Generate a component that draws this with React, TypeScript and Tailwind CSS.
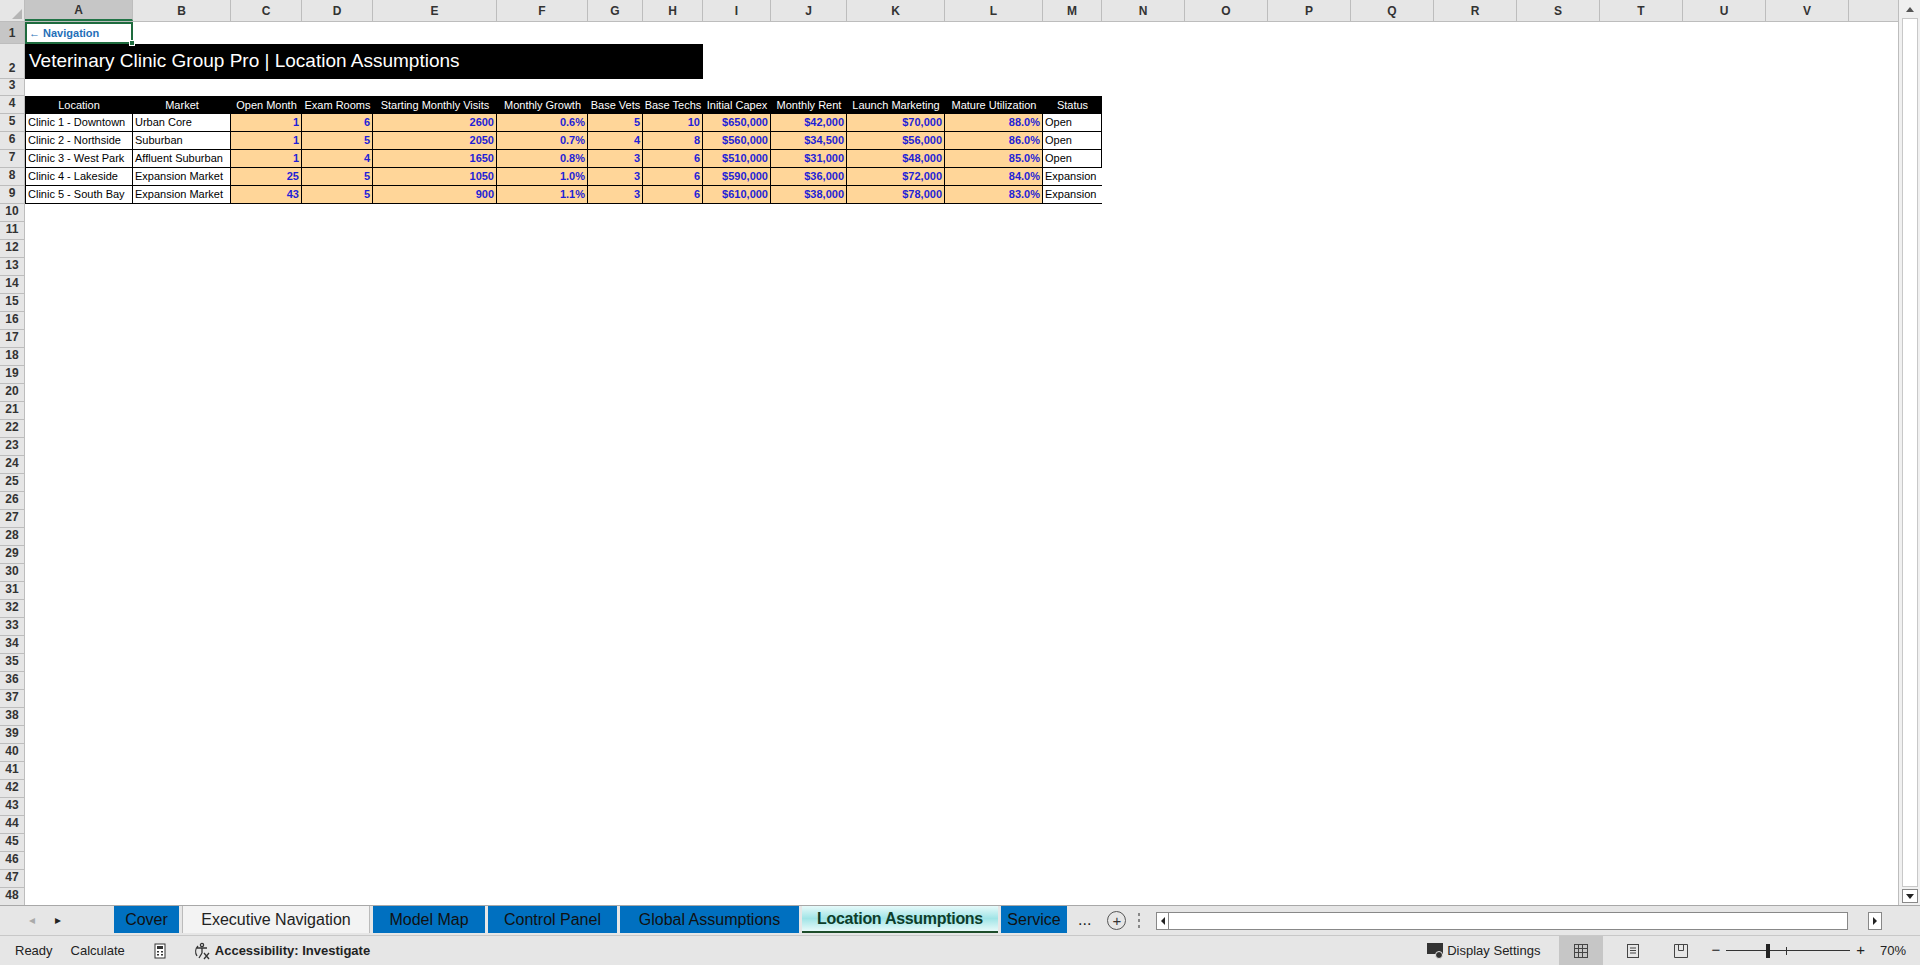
import React from "react";

const cols = [
  { l: "A", w: 108 }, { l: "B", w: 98 }, { l: "C", w: 71 }, { l: "D", w: 71 },
  { l: "E", w: 124 }, { l: "F", w: 91 }, { l: "G", w: 55 }, { l: "H", w: 60 },
  { l: "I", w: 68 }, { l: "J", w: 76 }, { l: "K", w: 98 }, { l: "L", w: 98 },
  { l: "M", w: 59 }, { l: "N", w: 83 }, { l: "O", w: 83 }, { l: "P", w: 83 },
  { l: "Q", w: 83 }, { l: "R", w: 83 }, { l: "S", w: 83 }, { l: "T", w: 83 },
  { l: "U", w: 83 }, { l: "V", w: 83 },
];

const headers = [
  "Location", "Market", "Open Month", "Exam Rooms", "Starting Monthly Visits", "Monthly Growth",
  "Base Vets", "Base Techs", "Initial Capex", "Monthly Rent", "Launch Marketing", "Mature Utilization", "Status",
];

const data = [
  ["Clinic 1 - Downtown", "Urban Core", "1", "6", "2600", "0.6%", "5", "10", "$650,000", "$42,000", "$70,000", "88.0%", "Open"],
  ["Clinic 2 - Northside", "Suburban", "1", "5", "2050", "0.7%", "4", "8", "$560,000", "$34,500", "$56,000", "86.0%", "Open"],
  ["Clinic 3 - West Park", "Affluent Suburban", "1", "4", "1650", "0.8%", "3", "6", "$510,000", "$31,000", "$48,000", "85.0%", "Open"],
  ["Clinic 4 - Lakeside", "Expansion Market", "25", "5", "1050", "1.0%", "3", "6", "$590,000", "$36,000", "$72,000", "84.0%", "Expansion"],
  ["Clinic 5 - South Bay", "Expansion Market", "43", "5", "900", "1.1%", "3", "6", "$610,000", "$38,000", "$78,000", "83.0%", "Expansion"],
];

const tabs = [
  { n: "Cover", w: 65, k: "blue" },
  { n: "Executive Navigation", w: 188, k: "plain" },
  { n: "Model Map", w: 112, k: "blue" },
  { n: "Control Panel", w: 129, k: "blue" },
  { n: "Global Assumptions", w: 179, k: "blue" },
  { n: "Location Assumptions", w: 196, k: "active" },
  { n: "Service", w: 66, k: "blue" },
];

const RowHead = ({ n, h, sel }: { n: number; h: number; sel?: boolean }) => (
  <div
    className={`w-[25px] shrink-0 flex items-end justify-center pb-[1px] border-r border-b border-[#bdbdbd] text-[12px] font-bold text-[#333] ${sel ? "bg-[#c6c6c6]" : "bg-[#e6e6e6]"}`}
    style={{ height: h }}
  >
    {n}
  </div>
);

export default function App() {
  const sum = (a: number, b: number) => cols.slice(a, b).reduce((s, c) => s + c.w, 0);
  const empties = Array.from({ length: 39 }, (_, i) => i + 10);

  return (
    <div className="w-[1920px] h-[965px] bg-white overflow-hidden flex flex-col" style={{ fontFamily: "'Liberation Sans', Arial, sans-serif" }}>
      <div className="flex h-[905px]">
        <div className="flex-1 overflow-hidden flex flex-col">
          {/* column headers */}
          <div className="flex h-[22px] shrink-0 bg-[#e6e6e6] border-b border-[#bdbdbd]">
            <div className="w-[25px] shrink-0 border-r border-[#bdbdbd] relative">
              <div className="absolute right-[2px] bottom-[2px] w-0 h-0 border-l-[10px] border-l-transparent border-b-[10px] border-b-[#b5b5b5]" />
            </div>
            {cols.map((c, i) => (
              <div
                key={c.l}
                className={`shrink-0 flex items-center justify-center text-[12px] font-bold text-[#333] border-r border-[#bdbdbd] ${i === 0 ? "bg-[#c6c6c6] border-b-2 border-b-[#217346]" : ""}`}
                style={{ width: c.w }}
              >
                {c.l}
              </div>
            ))}
            <div className="flex-1" />
          </div>

          {/* row 1 */}
          <div className="flex h-[22px] shrink-0">
            <RowHead n={1} h={22} sel />
            <div className="w-[108px] shrink-0 border-2 border-[#1e6b3e] flex items-end pl-[2px] pb-[1px] text-[11px] font-bold text-[#1f6fb8] relative">
              ← Navigation
              <div className="absolute -right-[4px] -bottom-[4px] w-[6px] h-[6px] bg-[#1e6b3e] border border-white" />
            </div>
          </div>

          {/* row 2 title */}
          <div className="flex h-[35px] shrink-0">
            <RowHead n={2} h={35} />
            <div className="bg-black text-white text-[19px] flex items-center pl-[4px]" style={{ width: sum(0, 8) }}>
              Veterinary Clinic Group Pro | Location Assumptions
            </div>
          </div>

          {/* row 3 */}
          <div className="flex h-[17px] shrink-0">
            <RowHead n={3} h={17} />
          </div>

          {/* row 4 headers */}
          <div className="flex h-[18px] shrink-0">
            <RowHead n={4} h={18} />
            {headers.map((h, i) => (
              <div
                key={h}
                className="shrink-0 bg-black text-white text-[11px] flex items-center justify-center whitespace-nowrap overflow-hidden"
                style={{ width: cols[i].w }}
              >
                {h}
              </div>
            ))}
          </div>

          {/* rows 5-9 */}
          {data.map((r, ri) => (
            <div key={ri} className="flex h-[18px] shrink-0">
              <RowHead n={ri + 5} h={18} />
              {r.map((v, ci) => {
                const num = ci >= 2 && ci <= 11;
                const boxed = ci < 2 || (ci === 12 && ri < 3);
                return (
                  <div
                    key={ci}
                    className={`shrink-0 h-[18px] flex items-center whitespace-nowrap overflow-hidden text-[11px] border-b border-black ${
                      num
                        ? "bg-[#ffd699] text-[#1f1fd6] font-bold justify-end pr-[2px] border-r"
                        : "bg-white text-black pl-[2px]"
                    } ${boxed ? "border-r" : ""} ${ci === 0 ? "border-l" : ""}`}
                    style={{ width: cols[ci].w }}
                  >
                    {v}
                  </div>
                );
              })}
            </div>
          ))}

          {empties.map((n) => (
            <div key={n} className="flex h-[18px] shrink-0">
              <RowHead n={n} h={18} />
            </div>
          ))}
        </div>

        {/* vertical scrollbar */}
        <div className="w-[22px] shrink-0 bg-[#f0f0f0] border-l border-[#bdbdbd] flex flex-col items-center justify-between py-[2px]">
          <div className="w-[16px] h-[14px] flex items-center justify-center">
            <div className="w-0 h-0 border-l-[4px] border-r-[4px] border-b-[5px] border-l-transparent border-r-transparent border-b-[#555]" />
          </div>
          <div className="flex-1 w-[16px] bg-white border border-[#c8c8c8] my-[2px]" />
          <div className="w-[16px] h-[14px] bg-white border border-[#888] flex items-center justify-center">
            <div className="w-0 h-0 border-l-[4px] border-r-[4px] border-t-[5px] border-l-transparent border-r-transparent border-t-[#222]" />
          </div>
        </div>
      </div>

      {/* tabs bar */}
      <div className="h-[30px] shrink-0 bg-[#e6e6e6] border-t border-[#a8a8a8] flex items-start">
        <div className="w-[114px] flex items-center h-[28px] gap-[20px] pl-[29px] text-[12px]">
          <span className="text-[#aaa]">◂</span>
          <span className="text-[#222]">▸</span>
        </div>
        {tabs.map((t) => (
          <div
            key={t.n}
            className={`shrink-0 h-[27px] mr-[3px] flex items-center justify-center text-[16px] whitespace-nowrap overflow-hidden ${
              t.k === "blue"
                ? "bg-[#0070c0] text-[#111]"
                : t.k === "plain"
                ? "bg-[#f3f3f3] text-[#222] border-x border-[#bbb]"
                : "bg-gradient-to-b from-[#e6fafa] via-[#9fe4e6] to-[#e6fafa] text-[#0d3d2a] font-bold border-b-2 border-[#1e4d2b] tracking-[-0.3px]"
            }`}
            style={{ width: t.w }}
          >
            {t.n}
          </div>
        ))}
        <span className="ml-[8px] h-[28px] flex items-center text-[16px] text-[#222]">...</span>
        <div className="ml-[16px] mt-[5px] w-[19px] h-[19px] rounded-full border border-[#555] flex items-center justify-center text-[15px] leading-none text-[#333]">+</div>
        <div className="ml-[12px] mt-[7px] flex flex-col gap-[3px]">
          <div className="w-[2px] h-[3px] bg-[#888]" />
          <div className="w-[2px] h-[3px] bg-[#888]" />
          <div className="w-[2px] h-[3px] bg-[#888]" />
        </div>
        <div className="ml-[16px] mt-[6px] w-[692px] h-[18px] bg-white border border-[#888] flex">
          <div className="w-[12px] border-r border-[#888] flex items-center justify-center">
            <div className="w-0 h-0 border-t-[4px] border-b-[4px] border-r-[4px] border-t-transparent border-b-transparent border-r-[#222]" />
          </div>
        </div>
        <div className="ml-[20px] mt-[6px] w-[14px] h-[18px] bg-white border border-[#888] flex items-center justify-center">
          <div className="w-0 h-0 border-t-[4px] border-b-[4px] border-l-[4px] border-t-transparent border-b-transparent border-l-[#222]" />
        </div>
      </div>

      {/* status bar */}
      <div className="h-[30px] shrink-0 bg-[#e6e6e6] border-t border-[#c8c8c8] flex items-center text-[13px] text-[#222]">
        <span className="ml-[15px]">Ready</span>
        <span className="ml-[18px]">Calculate</span>
        <svg className="ml-[28px]" width="14" height="16" viewBox="0 0 14 16">
          <rect x="2" y="1" width="10" height="14" fill="#fff" stroke="#333" />
          <rect x="4" y="3" width="6" height="3" fill="#333" />
          <g fill="#333">
            <rect x="4" y="8" width="2" height="1.5" /><rect x="8" y="8" width="2" height="1.5" />
            <rect x="4" y="11" width="2" height="1.5" /><rect x="8" y="11" width="2" height="1.5" />
          </g>
        </svg>
        <svg className="ml-[25px]" width="20" height="18" viewBox="0 0 20 18" fill="none" stroke="#333" strokeWidth="1.3">
          <circle cx="10" cy="3" r="1.6" />
          <path d="M5 6h10M10 6v5M10 11l-3 5M6 4a8 8 0 0 0-1 10" />
          <path d="M12 11l5 6M17 11l-5 6" />
        </svg>
        <span className="ml-[3px] font-bold">Accessibility: Investigate</span>
        <div className="flex-1" />
        <svg width="18" height="18" viewBox="0 0 18 18">
          <rect x="0" y="1" width="16" height="11" fill="#333" />
          <circle cx="12" cy="13" r="3.5" fill="#333" stroke="#e6e6e6" />
        </svg>
        <span className="ml-[2px]">Display Settings</span>
        <div className="ml-[19px] w-[44px] h-[30px] bg-[#c6c6c6] flex items-center justify-center">
          <svg width="16" height="16" viewBox="0 0 16 16" fill="none" stroke="#444">
            <rect x="1.5" y="1.5" width="13" height="13" />
            <path d="M1.5 5.5h13M1.5 9.5h13M5.5 1.5v13M9.5 1.5v13" />
          </svg>
        </div>
        <svg className="ml-[22px]" width="16" height="16" viewBox="0 0 16 16" fill="none" stroke="#444">
          <rect x="2.5" y="1.5" width="11" height="13" />
          <path d="M5 5h6M5 7.5h6M5 10h6" />
        </svg>
        <svg className="ml-[32px]" width="16" height="16" viewBox="0 0 16 16" fill="none" stroke="#444">
          <path d="M1.5 1.5h13v13h-13zM5.5 1.5v6h5v-6" />
        </svg>
        <span className="ml-[22px] text-[15px]">−</span>
        <div className="ml-[6px] w-[124px] h-[14px] relative flex items-center">
          <div className="w-full h-[1px] bg-[#333]" />
          <div className="absolute left-[60px] top-[3px] w-[1px] h-[8px] bg-[#333]" />
          <div className="absolute left-[40px] top-0 w-[4px] h-[14px] bg-[#222]" />
        </div>
        <span className="ml-[6px] text-[15px]">+</span>
        <span className="ml-[15px] mr-[14px]">70%</span>
      </div>
    </div>
  );
}
